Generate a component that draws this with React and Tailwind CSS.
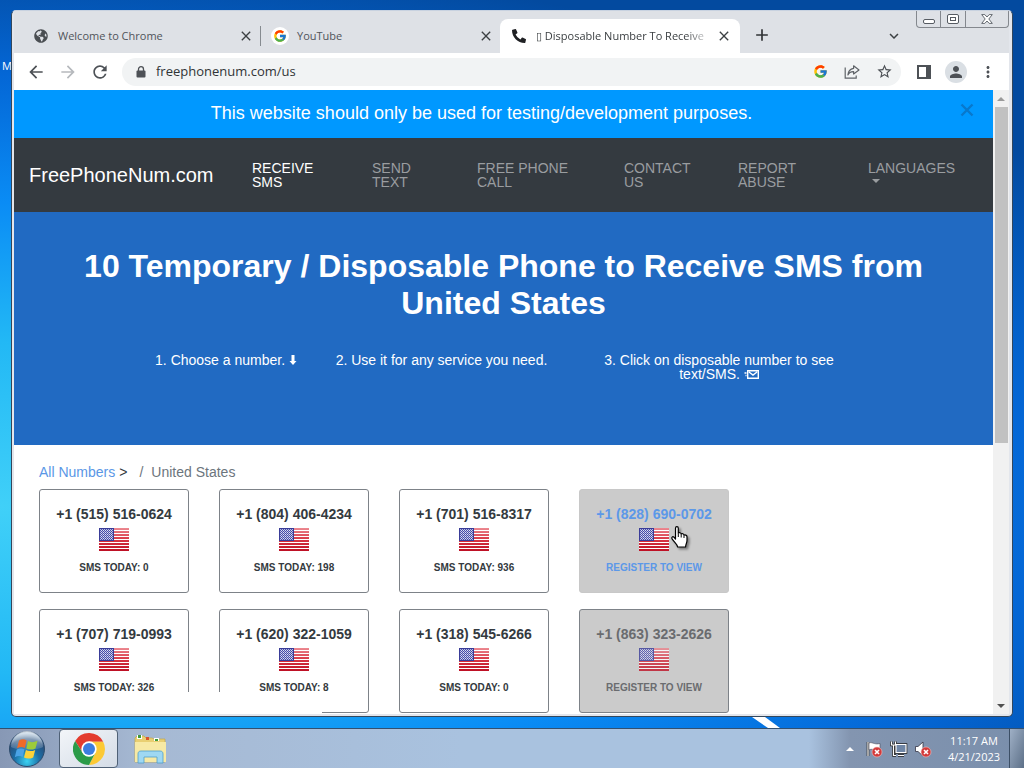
import React from 'react';
import {
  MdArrowBack,
  MdArrowForward,
  MdClose,
  MdAdd,
  MdKeyboardArrowDown,
  MdMoreVert,
  MdPerson,
  MdRefresh,
  MdStarBorder,
} from 'react-icons/md';
import { FaGlobeAmericas, FaPhoneAlt } from 'react-icons/fa';
import { FcGoogle } from 'react-icons/fc';

const tabs = [
  { title: 'Welcome to Chrome', icon: <FaGlobeAmericas className="w-3.5 h-3.5 text-[#4a4e52]" /> },
  { title: 'YouTube', icon: <FcGoogle className="w-3.5 h-3.5" />, round: true },
  { title: '▯ Disposable Number To Receive', icon: <FaPhoneAlt className="w-3.5 h-3.5 text-[#202124]" />, active: true },
];

const navLinks = [
  { lines: ['RECEIVE', 'SMS'], active: true },
  { lines: ['SEND', 'TEXT'] },
  { lines: ['FREE PHONE', 'CALL'] },
  { lines: ['CONTACT', 'US'] },
  { lines: ['REPORT', 'ABUSE'] },
];

const numbers = [
  { phone: '+1 (515) 516-0624', note: 'SMS TODAY: 0' },
  { phone: '+1 (804) 406-4234', note: 'SMS TODAY: 198' },
  { phone: '+1 (701) 516-8317', note: 'SMS TODAY: 936' },
  { phone: '+1 (828) 690-0702', note: 'REGISTER TO VIEW', hovered: true },
  { phone: '+1 (707) 719-0993', note: 'SMS TODAY: 326' },
  { phone: '+1 (620) 322-1059', note: 'SMS TODAY: 8' },
  { phone: '+1 (318) 545-6266', note: 'SMS TODAY: 0' },
  { phone: '+1 (863) 323-2626', note: 'REGISTER TO VIEW', locked: true },
];

const Flag = () => (
  <svg viewBox="0 0 30 23" className="w-[30px] h-[23px]" aria-hidden="true">
    <defs>
      <linearGradient id="stripe" x1="0" y1="0" x2="0" y2="1">
        <stop offset="0" stopColor="#ec8a92" />
        <stop offset="0.5" stopColor="#d83545" />
        <stop offset="1" stopColor="#bd1024" />
      </linearGradient>
      <pattern id="stars" width="2" height="2" patternUnits="userSpaceOnUse">
        <rect width="2" height="2" fill="#4a4ea6" />
        <rect width="1" height="1" fill="#dcdff4" />
        <rect x="1" y="1" width="1" height="1" fill="#b4b8e2" />
      </pattern>
    </defs>
    <rect width="30" height="23" fill="url(#stripe)" />
    {[2, 5, 8, 11, 14, 17, 20].map((y) => (
      <rect key={y} y={y} width="30" height="1" fill="#fff" />
    ))}
    <rect width="15" height="13" fill="#3a3c98" />
    <rect x="1" y="1" width="13" height="11" fill="url(#stars)" />
  </svg>
);

const HandCursor = () => (
  <svg viewBox="0 0 17 22" className="absolute left-[91px] top-9 w-[17px] h-[22px] drop-shadow-[2px_2px_1px_rgba(0,0,0,0.4)]" aria-hidden="true">
    <path
      d="M4.500 11.500V2.200C4.500.200 7.300.200 7.300 2.200V7.200C8 6.200 10.200 6.600 10.200 8.200 10.900 7.300 12.900 7.600 13 9.200 13.800 8.600 16 8.900 16 10.800V14.500C16 17 14.600 18 14.600 21H6.600C6.400 18.300 3.200 16.200 1.200 13.200.200 11.400 1.600 10 3 11.200L4.500 13Z"
      fill="#fff"
      stroke="#000"
      strokeWidth="1.200"
      strokeLinejoin="round"
    />
    <path d="M7.300 7.500v3.500M10.200 8.500v3M13 9.500v2.500" stroke="#000" strokeWidth="1" fill="none" />
  </svg>
);

const LockIcon = () => (
  <svg viewBox="0 0 10 12" className="w-2.5 h-3" aria-hidden="true">
    <path d="M2.500 5V3.200A2.500 2.500 0 0 1 7.500 3.200V5" fill="none" stroke="#4d5156" strokeWidth="1.300" />
    <rect x="0.500" y="4.500" width="9" height="7" rx="1" fill="#4d5156" />
  </svg>
);

const ShareIcon = () => (
  <svg viewBox="0 0 16 16" className="w-4 h-4" fill="none" stroke="#5f6368" strokeWidth="1.200" aria-hidden="true">
    <path d="M1.200 3.500V14.200H12.200V11.500" />
    <path d="M9.600 1.800L15 6L9.600 10V7.600C6.800 7.500 5 8.600 3.900 11C4.200 7.200 6.200 4.800 9.600 4.300Z" strokeLinejoin="round" />
  </svg>
);

const ChromeLogo = () => (
  <svg viewBox="0 0 48 48" className="w-8 h-8" aria-hidden="true">
    <path d="M24 13H45.300A24 24 0 0 0 3.200 12L14.500 29.500Z" fill="#e33b2e" />
    <path d="M33.500 29.500L24 48A24 24 0 0 0 45.300 13H24Z" fill="#fcc934" />
    <path d="M14.500 29.500L3.200 12A24 24 0 0 0 24 48L33.500 29.500Z" fill="#2b9b48" />
    <circle cx="24" cy="24" r="11.500" fill="#fff" />
    <circle cx="24" cy="24" r="9" fill="#3c7de0" />
  </svg>
);

const StartOrb = () => (
  <svg viewBox="0 0 38 38" className="w-[38px] h-[38px]" aria-hidden="true">
    <defs>
      <radialGradient id="orb" cx="0.5" cy="0.85" r="0.8">
        <stop offset="0" stopColor="#3ad2f2" />
        <stop offset="0.45" stopColor="#1b6ea6" />
        <stop offset="0.8" stopColor="#274f7c" />
        <stop offset="1" stopColor="#8fb0cc" />
      </radialGradient>
      <linearGradient id="orbShine" x1="0" y1="0" x2="0" y2="1">
        <stop offset="0" stopColor="#fff" stopOpacity="0.7" />
        <stop offset="1" stopColor="#fff" stopOpacity="0.1" />
      </linearGradient>
    </defs>
    <circle cx="19" cy="19" r="17.500" fill="url(#orb)" stroke="#2c4a6b" />
    <path d="M3 17A16 16 0 0 1 35 17C28 21 10 21 3 17Z" fill="url(#orbShine)" />
    <path d="M11 10.500C14 8.800 16.500 9.200 18.600 10.400L16.800 18C14.600 16.800 12 16.800 9 18.200Z" fill="#ef6a28" />
    <path d="M20 11C22.500 12.600 26 12.500 29.500 10.800L27.500 18.400C24.500 20 21 20 18.300 18.500Z" fill="#9ccb3b" />
    <path d="M8.700 19.600C11.500 18.200 14.300 18.200 16.500 19.400L14.600 27C12.400 25.800 9.600 25.800 6.800 27.200Z" fill="#4aa3e6" />
    <path d="M17.900 20C20.500 21.400 24 21.500 27.200 19.900L25.200 27.400C22 29 18.600 28.900 16 27.500Z" fill="#fbd23a" />
  </svg>
);

const FolderIcon = () => (
  <svg viewBox="0 0 33 30" className="w-[33px] h-[30px]" aria-hidden="true">
    <path d="M1 4L3 2H10L12 4H18L20 5H31V28H1Z" fill="#e9cf72" stroke="#c4a648" strokeWidth="0.700" />
    <path d="M3 1H8V5H3Z M20 4H25V7H20Z" fill="#fff" />
    <path d="M4 1H7V4H4Z" fill="#3f9a3a" />
    <path d="M12 3H15V6H12Z" fill="#d9542c" />
    <path d="M21 5H24V7H21Z" fill="#3f9a3a" />
    <path d="M1 8H32V28H1Z" fill="#f7e9a4" />
    <path d="M4 29V20C4 18 5 17 7 17H26C28 17 29 18 29 20V29H23V23H10V29Z" fill="#9fd8f2" stroke="#4e9fcb" strokeWidth="0.800" />
  </svg>
);

const ErrorBadge = ({ cx, cy }) => (
  <g>
    <circle cx={cx} cy={cy} r="5" fill="#d33a3a" stroke="#f3c0c0" strokeWidth="0.600" />
    <path d={`M${cx - 2} ${cy - 2}l4 4M${cx + 2} ${cy - 2}l-4 4`} stroke="#fff" strokeWidth="1.600" />
  </g>
);

const WindowControls = () => (
  <div className="absolute right-0 top-0 flex h-[17px] rounded-b border border-t-0 border-[#84888e] text-[#4b5058]">
    <button aria-label="Minimize" className="w-6 flex items-center justify-center border-r border-[#84888e]">
      <span className="mt-1 w-3 h-[5px] rounded-xs border border-[#565b62] bg-white" />
    </button>
    <button aria-label="Maximize" className="w-[25px] flex items-center justify-center border-r border-[#84888e]">
      <span className="w-3 h-2.5 rounded-xs border border-[#565b62] bg-white flex items-center justify-center">
        <span className="w-1.5 h-1 border border-[#565b62]" />
      </span>
    </button>
    <button aria-label="Close" className="w-[42px] flex items-center justify-center">
      <svg viewBox="0 0 12 10" className="w-3 h-2.5" fill="#fff" stroke="#565b62" strokeWidth="0.900">
        <path d="M.7.6H3.800L6 3 8.200.6H11.300L7.800 5 11.300 9.400H8.200L6 7 3.800 9.400H.7L4.200 5Z" />
      </svg>
    </button>
  </div>
);

const TabStrip = () => (
  <div className="relative flex h-[42px] pl-2 items-end bg-[#dee1e6]">
    {tabs.map((tab, index) => (
      <div
        key={index}
        className={
          tab.active
            ? 'flex items-center h-[34px] w-60 pl-2.5 pr-2 bg-white rounded-t-lg'
            : 'flex items-center h-[34px] w-[239px] pl-2.5 pr-1.5'
        }
      >
        <button className="flex flex-1 min-w-0 items-center text-left">
          <span
            className={
              tab.round
                ? 'flex w-[18px] h-[18px] shrink-0 items-center justify-center rounded-full bg-white'
                : 'flex w-[18px] h-[18px] shrink-0 items-center justify-center'
            }
          >
            {tab.icon}
          </span>
          <span
            className={
              tab.active
                ? 'ml-2 flex-1 whitespace-nowrap text-[11px] text-[#3c4043] [mask-image:linear-gradient(to_right,black_85%,transparent)]'
                : 'ml-2 flex-1 whitespace-nowrap text-[11px] text-[#50545a]'
            }
          >
            {tab.title}
          </span>
        </button>
        <button aria-label={`Close ${tab.title}`} className="ml-1">
          <MdClose className="w-4 h-4 text-[#3c4043]" />
        </button>
        {index === 0 && <span className="ml-1.5 -mr-1.5 w-px h-5 bg-[#868b90]" />}
      </div>
    ))}
    <button aria-label="New tab" className="ml-3 mb-2">
      <MdAdd className="w-5 h-5 text-[#303336]" />
    </button>
    <button aria-label="Search tabs" className="ml-auto mr-[106px] mb-2">
      <MdKeyboardArrowDown className="w-[18px] h-[18px] text-[#3c4043]" />
    </button>
    <WindowControls />
  </div>
);

const Toolbar = () => (
  <div className="flex items-center h-[37px] pl-3 pr-3 bg-white text-[#4d5156]">
    <button aria-label="Back"><MdArrowBack className="w-5 h-5" /></button>
    <button aria-label="Forward" className="ml-3"><MdArrowForward className="w-5 h-5 text-[#b6b9bd]" /></button>
    <button aria-label="Reload" className="ml-3"><MdRefresh className="w-5 h-5" /></button>
    <div className="flex flex-1 items-center h-7 ml-3 pl-3.5 pr-2 rounded-full bg-[#f1f3f4]">
      <LockIcon />
      <input
        aria-label="Address"
        defaultValue="freephonenum.com/us"
        className="ml-2.5 flex-1 min-w-0 bg-transparent text-[13px] text-[#303336] outline-none"
      />
      <button aria-label="Google"><FcGoogle className="w-[15px] h-[15px]" /></button>
      <button aria-label="Share" className="ml-4"><ShareIcon /></button>
      <button aria-label="Bookmark" className="ml-4"><MdStarBorder className="w-[17px] h-[17px]" /></button>
    </div>
    <button aria-label="Side panel" className="ml-4">
      <svg viewBox="0 0 14 14" className="w-3.5 h-3.5">
        <path d="M0 0H14V14H0Z M2 2V12H9V2Z" fill="currentColor" fillRule="evenodd" />
      </svg>
    </button>
    <button aria-label="Profile" className="ml-3.5 flex w-[22px] h-[22px] items-center justify-center rounded-full bg-[#dadfe4]">
      <MdPerson className="w-[18px] h-[18px]" />
    </button>
    <button aria-label="Menu" className="ml-3"><MdMoreVert className="w-[18px] h-[18px]" /></button>
  </div>
);

const PhoneCard = ({ item }) => {
  let style = 'border-[#7d8288] bg-white text-[#343a40]';
  if (item.hovered) style = 'border-[#c8c8c8] bg-[#cbcbcb] text-[#5c98e8]';
  if (item.locked) style = 'border-[#7d8288] bg-[#cbcbcb] text-[#6a6c6f]';

  return (
    <a href="#" className={`relative flex flex-col items-center h-[104px] pt-3.5 rounded-[3px] border font-bold ${style}`}>
      <span className="text-sm leading-5">{item.phone}</span>
      <span className={item.locked ? 'mt-1 h-6 opacity-80' : 'mt-1 h-6'}><Flag /></span>
      <span className="mt-2 text-[10px] leading-4">{item.note}</span>
      {item.hovered && <HandCursor />}
    </a>
  );
};

const Page = () => (
  <div className="flex-1 min-w-0 overflow-hidden bg-white font-['Liberation_Sans',Arial,sans-serif]">
    <div className="flex h-12 pr-4 bg-[#0098ff] text-white">
      <p className="flex-1 pl-3 pr-5 text-center text-lg leading-[46px]">
        This website should only be used for testing/development purposes.
      </p>
      <button aria-label="Dismiss" className="mb-2 text-[#0878cc]">
        <svg viewBox="0 0 20 20" className="w-5 h-5" fill="none" stroke="currentColor" strokeWidth="2.400">
          <path d="M4.500 4.500L15.500 15.500M15.500 4.500L4.500 15.500" />
        </svg>
      </button>
    </div>

    <nav className="flex items-center h-[74px] pl-[15px] bg-[#343a40]">
      <a href="#" className="w-[223px] text-xl text-white">FreePhoneNum.com</a>
      <div className="grid flex-1 grid-cols-[120px_105px_147px_114px_130px_1fr] text-sm leading-3.5 text-[#9a9da0]">
        {navLinks.map((link) => (
          <a key={link.lines[0]} href="#" className={link.active ? 'text-white' : ''}>
            {link.lines[0]}
            <br />
            {link.lines[1]}
          </a>
        ))}
        <a href="#">
          LANGUAGES
          <span className="block mt-1 ml-1 w-0 border-x-4 border-t-4 border-x-transparent border-t-current" />
        </a>
      </div>
    </nav>

    <header className="pt-9 pb-16 bg-[#216ac2] text-center text-white">
      <h1 className="mx-auto max-w-[880px] text-[32px] leading-[37px] font-bold">
        10 Temporary / Disposable Phone to Receive SMS from United States
      </h1>
      <div className="mt-[31px] grid grid-cols-[184px_247px_308px] justify-center text-sm leading-3.5">
        <p>
          1. Choose a number.{' '}
          <svg viewBox="0 0 8 10" className="inline w-2 h-2.5 align-baseline" fill="#fff" aria-hidden="true">
            <path d="M2.500 0H5.500V6H7.500L4 10L.5 6H2.500Z" />
          </svg>
        </p>
        <p>2. Use it for any service you need.</p>
        <p className="px-8">
          3. Click on disposable number to see text/SMS.{' '}
          <svg viewBox="0 0 15 9" className="inline w-[15px] h-[9px] align-baseline" fill="none" stroke="#fff" strokeWidth="1.400" aria-hidden="true">
            <path d="M3.700 .7H14.300V8.300H3.700ZM5 2L9 5L13 2M.5 3H2.500M1.500 5.500H2.500" />
          </svg>
        </p>
      </div>
    </header>

    <main className="px-[25px] pt-5">
      <div className="mb-2.5 text-sm leading-3.5 text-[#6c757d]">
        <a href="#" className="text-[#5a97e6]">All Numbers</a>
        <span className="ml-1 text-[#343a40]">&gt;</span>
        <span className="ml-3">/</span>
        <span className="ml-2">United States</span>
      </div>
      <div className="grid grid-cols-[repeat(4,150px)] gap-x-[30px] gap-y-4">
        {numbers.map((item) => (
          <PhoneCard key={item.phone} item={item} />
        ))}
      </div>
    </main>
  </div>
);

const Scrollbar = () => (
  <div className="flex flex-col items-center w-4 bg-[#f1f1f1]">
    <span className="flex h-[17px] items-center">
      <span className="border-x-4 border-b-4 border-x-transparent border-b-[#9a9a9a]" />
    </span>
    <div className="flex-1 w-[13px]">
      <div className="h-[57%] bg-[#c1c1c1]" />
    </div>
    <span className="flex h-[17px] items-center">
      <span className="border-x-4 border-t-4 border-x-transparent border-t-[#505050]" />
    </span>
  </div>
);

const Taskbar = () => (
  <footer className="flex h-10 shrink-0 items-center border-t border-[#33506f] bg-[linear-gradient(to_right,#8798b5_0%,#a6b9d3_14%,#a9c2df_45%,#a9c2df_79%,#8395b0_83%,#7a8fac_100%)] text-white">
    <button aria-label="Start" className="ml-2"><StartOrb /></button>
    <button aria-label="Google Chrome" className="ml-[13px] flex w-[59px] h-[39px] items-center justify-center rounded-sm border border-[#4f6176] bg-linear-to-br from-[#f2f5f9] to-[#d4dce6]">
      <ChromeLogo />
    </button>
    <button aria-label="Windows Explorer" className="ml-4"><FolderIcon /></button>
    <div className="ml-auto flex h-full items-center">
      <button aria-label="Show hidden icons">
        <span className="block w-0 border-x-4 border-b-4 border-x-transparent border-b-white" />
      </button>
      <svg viewBox="0 0 18 18" className="ml-3 w-[18px] h-[18px]" aria-hidden="true">
        <path d="M2 2V16" stroke="#222" strokeWidth="2.600" />
        <path d="M2 2V16" stroke="#fff" strokeWidth="1.200" />
        <path d="M3 3C6 1.500 8 5 14 3.500V10C9 11 6 8 3 10Z" fill="#fff" stroke="#445" strokeWidth="0.600" />
        <ErrorBadge cx={11} cy={12} />
      </svg>
      <svg viewBox="0 0 18 18" className="ml-1.5 w-[18px] h-[18px]" fill="none" aria-hidden="true">
        <path d="M6 4.500H16V12.500H6ZM8 15.500H14M1.500 1.500V5H5.500V1.500M3.500 5V15.500H6" stroke="#222" strokeWidth="2.600" />
        <path d="M6 4.500H16V12.500H6Z" fill="#6f86a6" />
        <path d="M6 4.500H16V12.500H6ZM8 15.500H14M1.500 1.500V5H5.500V1.500M3.500 5V15.500H6" stroke="#fff" strokeWidth="1.200" />
      </svg>
      <svg viewBox="0 0 18 18" className="ml-1.5 w-[18px] h-[18px]" aria-hidden="true">
        <path d="M1.500 6.500H4L9 2V16L4 11.500H1.500Z" fill="#fff" stroke="#334" strokeWidth="0.800" />
        <ErrorBadge cx={12} cy={12} />
      </svg>
      <div className="ml-[15px] w-[54px] text-center text-[11px] leading-4 whitespace-nowrap">
        <p>11:17 AM</p>
        <p>4/21/2023</p>
      </div>
      <button aria-label="Show desktop" className="ml-2 w-[15px] h-full border-l border-[#3c4f66] bg-linear-to-br from-[#9fb0c6] to-[#5d7088]" />
    </div>
  </footer>
);

const App = () => {
  return (
    <div className="flex flex-col h-screen overflow-hidden font-['Open_Sans','Noto_Sans',sans-serif] bg-[radial-gradient(ellipse_130%_72%_at_0%_66%,#40d0f8_0%,#22b8f5_30%,#0a8cf5_55%,#0467d6_78%,#034a9f_100%)]">
      <div className="relative flex flex-1 min-h-0 px-[11px] pt-2.5 pb-[11px]">
        <span className="absolute left-0.5 top-[59px] text-[11px] leading-3.5 text-white">M</span>
        <svg viewBox="0 0 60 11" className="absolute right-[242px] bottom-0 w-[60px] h-[11px]" aria-hidden="true">
          <path d="M30 0H43L58 11H46Z" fill="#fff" />
        </svg>

        <div className="relative flex flex-1 flex-col min-w-0 pl-0.5 pr-[3px] pb-0.5 rounded-[5px] overflow-hidden border border-[#33475c] border-t-[#c8d2e0] bg-[#e3e6ec]">
          <TabStrip />
          <Toolbar />
          <div className="relative flex flex-1 min-h-0">
            <Page />
            <Scrollbar />
            {/* empty link status bubble */}
            <div className="absolute left-0 bottom-0 w-[308px] h-[22px] bg-white" />
          </div>
        </div>
      </div>
      <Taskbar />
    </div>
  );
};

export default App;
